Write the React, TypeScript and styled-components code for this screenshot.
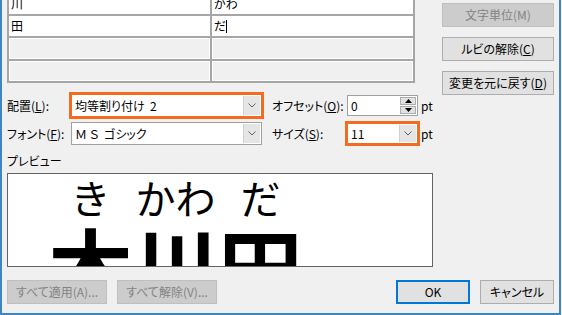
import styled, { createGlobalStyle } from "styled-components"
import { Fragment } from "react"

const GlobalStyle = createGlobalStyle`
  html, body {
    margin: 0;
    padding: 0;
    background: #f4f4f4;
  }
  body {
    font-family: "Noto Sans CJK JP", "Noto Sans", sans-serif;
    font-size: 12px;
    font-feature-settings: "palt";
    color: #000;
  }
`

const colors = {
  bg: "#f0f0f0",
  frame: "#3f86c0",
  line: "#a6a6a6",
  field: "#ffffff",
  btn: "#e1e1e1",
  btnBorder: "#adadad",
  disabledBg: "#cccccc",
  disabledBorder: "#bfbfbf",
  disabledText: "#838383",
  accent: "#0078d7",
  orange: "#f26b21",
}

const Window = styled.div`
  width: 561px;
  height: 315px;
  box-sizing: border-box;
  overflow: hidden;
  background: ${colors.bg};
  border-left: 2px solid ${colors.frame};
  border-right: 2px solid ${colors.frame};
  border-bottom: 2px solid ${colors.frame};
  padding: 0 5px 0 5px;
  display: flex;
  flex-direction: column;
`

const Main = styled.div`
  display: flex;
  align-items: flex-start;
`

const LeftColumn = styled.div`
  width: 430px;
  display: flex;
  flex-direction: column;
`

const SideColumn = styled.div`
  margin-left: 5px;
  padding-top: 3px;
  display: flex;
  flex-direction: column;
  gap: 10px;
`

const RubyTable = styled.div`
  margin-top: -8px;
  width: 408px;
  box-sizing: border-box;
  display: grid;
  grid-template-columns: 201px 201px;
  grid-template-rows: 20px 20px 21px 20px;
  gap: 2px;
  padding: 2px;
  background: ${colors.line};
`

const Cell = styled.div<{ $disabled?: boolean }>`
  background: ${(p) => (p.$disabled ? colors.bg : colors.field)};
  box-shadow: ${(p) => (p.$disabled ? "inset 1px 1px 0 #fff, inset -1px -1px 0 #fff" : "none")};
  display: flex;
  align-items: center;
  padding-left: 2px;
  line-height: 1;
`

const Caret = styled.span`
  display: inline-block;
  width: 1px;
  height: 13px;
  background: #000;
`

const FormGrid = styled.div`
  margin-top: 11px;
  display: grid;
  grid-template-columns: 64px 191px 85px 71px auto;
  grid-auto-rows: 23px;
  row-gap: 5px;
  align-items: center;
`

const Label = styled.div<{ $indent?: boolean }>`
  padding-left: ${(p) => (p.$indent ? "10px" : "0")};
  white-space: nowrap;
  line-height: 1;
`

const Combo = styled.div<{ $focus?: boolean; $small?: boolean }>`
  height: ${(p) => (p.$small ? "21px" : "23px")};
  box-sizing: border-box;
  background: ${colors.field};
  border: 1px solid ${(p) => (p.$focus ? colors.orange : "#a0a0a0")};
  outline: ${(p) => (p.$focus ? `2px solid ${colors.orange}` : "none")};
  display: flex;
  align-items: stretch;
`

const ComboText = styled.div`
  flex: 1;
  display: flex;
  align-items: center;
  padding-left: 3px;
  line-height: 1;
  white-space: pre;
`

const ComboArrow = styled.div`
  width: 16px;
  margin: 1px;
  background: #e5e5e5;
  border-left: 1px solid #d0d0d0;
  display: grid;
  place-items: center;
`

const Spin = styled.div`
  width: 16px;
  margin: 1px;
  display: flex;
  flex-direction: column;
  gap: 1px;
`

const SpinButton = styled.div`
  flex: 1;
  background: ${colors.btn};
  border: 1px solid ${colors.btnBorder};
  display: grid;
  place-items: center;
`

const Unit = styled.div`
  padding-left: 3px;
  line-height: 1;
`

const PreviewLabel = styled.div`
  margin-top: 8px;
  height: 16px;
  line-height: 16px;
`

const PreviewBox = styled.div`
  margin-top: 4px;
  width: 426px;
  height: 94px;
  box-sizing: border-box;
  border: 1px solid #646464;
  background: #fff;
  overflow: hidden;
  display: flex;
  padding: 3px 0 0 40px;
`

const Glyph = styled.div`
  width: 85px;
  display: flex;
  flex-direction: column;
  align-items: center;
`

const RubyText = styled.div`
  font-size: 40px;
  font-feature-settings: normal;
  line-height: 1;
  white-space: nowrap;
`

const BaseText = styled.div`
  font-size: 85px;
  font-weight: 700;
  line-height: 1;
  margin-top: 4px;
`

const Button = styled.div<{ $variant?: "disabled" | "default" }>`
  height: 24px;
  box-sizing: border-box;
  display: grid;
  place-items: center;
  line-height: 1;
  white-space: nowrap;
  background: ${(p) => (p.$variant === "disabled" ? colors.disabledBg : colors.btn)};
  color: ${(p) => (p.$variant === "disabled" ? colors.disabledText : "#000")};
  border: ${(p) =>
    p.$variant === "disabled"
      ? `1px solid ${colors.disabledBorder}`
      : p.$variant === "default"
      ? `2px solid ${colors.accent}`
      : `1px solid ${colors.btnBorder}`};
`

const SideButton = styled(Button)`
  width: 112px;
`

const BottomRow = styled.div`
  margin-top: 13px;
  display: flex;
  gap: 10px;
`

const WideButton = styled(Button)`
  width: 100px;
`

const DialogButton = styled(Button)`
  width: 74px;
`

const Spacer = styled.div`
  flex: 1;
`

function Chevron() {
  return (
    <svg width="8" height="5" viewBox="0 0 8 5">
      <polyline points="0.5,0.5 4,4 7.5,0.5" fill="none" stroke="#606060" strokeWidth="1" />
    </svg>
  )
}

function Triangle({ up }: { up?: boolean }) {
  return (
    <svg width="7" height="4" viewBox="0 0 7 4">
      <polygon points={up ? "0,4 3.5,0 7,4" : "0,0 3.5,4 7,0"} fill="#000" />
    </svg>
  )
}

const rows = [
  { base: "川", ruby: "かわ" },
  { base: "田", ruby: "だ", caret: true },
]

const preview = [
  { ruby: "き", base: "木" },
  { ruby: "かわ", base: "川" },
  { ruby: "だ", base: "田" },
]

export default function App() {
  return (
    <>
      <GlobalStyle />
      <Window>
        <Main>
          <LeftColumn>
            <RubyTable>
              {rows.map((r) => (
                <Fragment key={r.base}>
                  <Cell>{r.base}</Cell>
                  <Cell>
                    {r.ruby}
                    {r.caret && <Caret />}
                  </Cell>
                </Fragment>
              ))}
              <Cell $disabled />
              <Cell $disabled />
              <Cell $disabled />
              <Cell $disabled />
            </RubyTable>

            <FormGrid>
              <Label>
                配置(<u>L</u>):
              </Label>
              <Combo $focus>
                <ComboText>均等割り付け  2</ComboText>
                <ComboArrow>
                  <Chevron />
                </ComboArrow>
              </Combo>
              <Label $indent>
                オフセット(<u>O</u>):
              </Label>
              <Combo $small>
                <ComboText>0</ComboText>
                <Spin>
                  <SpinButton>
                    <Triangle up />
                  </SpinButton>
                  <SpinButton>
                    <Triangle />
                  </SpinButton>
                </Spin>
              </Combo>
              <Unit>pt</Unit>

              <Label>
                フォント(<u>F</u>):
              </Label>
              <Combo>
                <ComboText>Ｍ Ｓ  ゴシック</ComboText>
                <ComboArrow>
                  <Chevron />
                </ComboArrow>
              </Combo>
              <Label $indent>
                サイズ(<u>S</u>):
              </Label>
              <Combo $focus $small>
                <ComboText>11</ComboText>
                <ComboArrow>
                  <Chevron />
                </ComboArrow>
              </Combo>
              <Unit>pt</Unit>
            </FormGrid>

            <PreviewLabel>プレビュー</PreviewLabel>
            <PreviewBox>
              {preview.map((p) => (
                <Glyph key={p.base}>
                  <RubyText>{p.ruby}</RubyText>
                  <BaseText>{p.base}</BaseText>
                </Glyph>
              ))}
            </PreviewBox>
          </LeftColumn>

          <SideColumn>
            <SideButton $variant="disabled">文字単位(M)</SideButton>
            <SideButton>
              <span>
                ルビの解除(<u>C</u>)
              </span>
            </SideButton>
            <SideButton>
              <span>
                変更を元に戻す(<u>D</u>)
              </span>
            </SideButton>
          </SideColumn>
        </Main>

        <BottomRow>
          <WideButton $variant="disabled">すべて適用(A)...</WideButton>
          <WideButton $variant="disabled">すべて解除(V)...</WideButton>
          <Spacer />
          <DialogButton $variant="default">OK</DialogButton>
          <DialogButton>キャンセル</DialogButton>
        </BottomRow>
      </Window>
    </>
  )
}
